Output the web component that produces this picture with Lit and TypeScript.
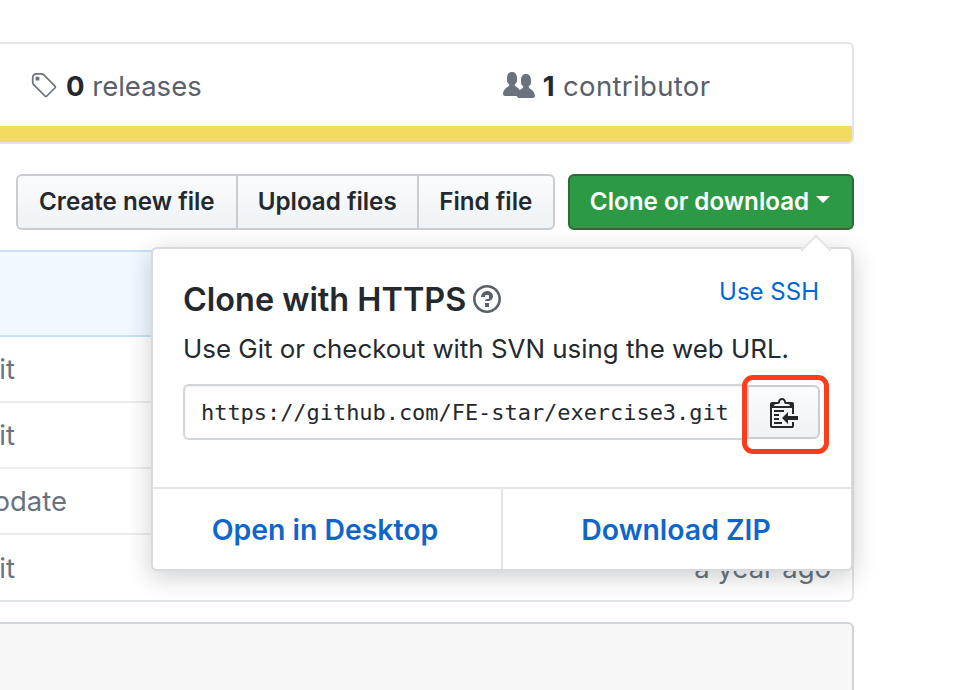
import { LitElement, html, css } from "lit";
import { customElement } from "lit/decorators.js";

const tagPath = "M7.73 1.73C7.26 1.26 6.62 1 5.96 1H3.5C2.13 1 1 2.13 1 3.5v2.47c0 .66.27 1.3.73 1.77l6.06 6.06c.39.39 1.02.39 1.41 0l4.59-4.59a.996.996 0 000-1.41L7.73 1.73zM2.38 7.09c-.31-.3-.47-.7-.47-1.13V3.5c0-.88.72-1.59 1.59-1.59h2.47c.42 0 .83.16 1.13.47l6.14 6.13-4.73 4.73-6.13-6.15zM3.01 3h2v2H3V3h.01z";
const orgPath = "M16 12.999c0 .439-.45 1-1 1H7.995c-.539 0-.994-.447-.995-.999H1c-.54 0-1-.561-1-1 0-2.634 3-4 3-4s.229-.409 0-1c-.841-.621-1.058-.59-1-3 .058-2.419 1.367-3 2.5-3s2.442.58 2.5 3c.058 2.41-.159 2.379-1 3-.229.59 0 1 0 1s1.549.711 2.42 2.088C9.196 9.369 10 8.999 10 8.999s.229-.409 0-1c-.841-.62-1.058-.59-1-3 .058-2.419 1.367-3 2.5-3s2.437.581 2.495 3c.059 2.41-.158 2.38-1 3-.229.59 0 1 0 1s3.005 1.366 3.005 4z";
const clipPath = "M2 13h4v1H2v-1zm5-6H2v1h5V7zm2 3V8l-3 3 3 3v-2h5v-2H9zM4.5 9H2v1h2.5V9zM2 12h2.5v-1H2v1zm9 1h1v2c-.02.28-.11.52-.3.7-.19.18-.42.28-.7.3H1c-.55 0-1-.45-1-1V4c0-.55.45-1 1-1h3c0-1.11.89-2 2-2 1.11 0 2 .89 2 2h3c.55 0 1 .45 1 1v5h-1V6H1v9h10v-2zM2 5h8c0-.55-.45-1-1-1H8c-.55 0-1-.45-1-1s-.45-1-1-1-1 .45-1 1-.45 1-1 1H3c-.55 0-1 .45-1 1z";
const qPath = "M6 10h2v2H6v-2zm4-3.5C10 8.64 8 9 8 9H6c0-.55.45-1 1-1h.5c.28 0 .5-.22.5-.5v-1c0-.28-.22-.5-.5-.5h-1c-.28 0-.5.22-.5.5V7H4c0-1.5 1.5-3 3-3s3 1 3 2.5zM7 2.3c3.14 0 5.7 2.56 5.7 5.7s-2.56 5.7-5.7 5.7A5.71 5.71 0 011.3 8c0-3.14 2.56-5.7 5.7-5.7zM7 1C3.14 1 0 4.14 0 8s3.14 7 7 7 7-3.14 7-7-3.14-7-7-7z";

@customElement("app-root")
export class AppRoot extends LitElement {
  static styles = css`
    :host { display: block; width: 958px; height: 690px; overflow: hidden; background: #fff; font-family: Inter, "Liberation Sans", sans-serif; color: #24292e; }
    * { box-sizing: border-box; }
    .page { position: relative; width: 854px; height: 690px; padding-top: 42px; }
    .summary { margin-left: -20px; height: 102px; border: 2px solid #e1e4e8; border-radius: 6px; overflow: hidden; display: flex; flex-direction: column; }
    .stats { height: 82px; display: flex; align-items: center; font-size: 27.5px; color: #586069; padding-top: 2px; }
    .stat { display: flex; align-items: center; gap: 8px; white-space: nowrap; }
    .stat b { color: #24292e; font-weight: 700; }
    .stat.rel { margin-left: 48px; }
    .stat.con { margin-left: 301px; }
    .stat.con span { letter-spacing: .35px; }
    .stat svg { fill: #6a737d; display: block; }
    .bar { height: 16px; background: #f1dc60; }
    .actions { display: flex; justify-content: space-between; margin: 30px 0 20px 16px; }
    .group { display: flex; height: 56px; border: 2px solid #c9cdd1; border-radius: 6px; background: linear-gradient(#fafbfc, #eff3f6); }
    .group span { display: flex; align-items: center; padding: 0 20.5px 2px 20px; font-size: 24.2px; font-weight: 600; color: #24292e; white-space: nowrap; }
    .group span:first-child { padding: 0 21px 2px 21px; }
    .group span + span { border-left: 2px solid #c9cdd1; }
    .green { height: 56px; width: 286px; display: flex; align-items: center; justify-content: center; gap: 7px; padding-bottom: 2px; padding-right: 2px; border: 2px solid #2a6b37; border-radius: 6px; background: #2c9a45; color: #fff; font-size: 24.2px; font-weight: 600; white-space: nowrap; }
    .caret { width: 0; height: 0; border: 7.5px solid transparent; border-top-color: #fff; border-bottom: 0; margin-bottom: 4px; }
    .files { margin-left: -20px; height: 352px; border: 2px solid #e1e4e8; border-top: 0; border-radius: 6px; display: flex; flex-direction: column; }
    .head { flex: none; height: 87px; background: #f1f8ff; border-top: 2px solid #c8e1ff; border-bottom: 2px solid #c8e1ff; }
    .row { flex: none; height: 66px; display: flex; align-items: center; justify-content: space-between; font-size: 27.5px; color: #6a737d; border-bottom: 2px solid #eaecef; padding-right: 21px; white-space: nowrap; }
    .row:last-child { height: 65px; border-bottom: 0; }
    .msg { width: 33px; display: flex; justify-content: flex-end; }
    .msg.far { width: 85px; }
    .bottom { margin: 20px 0 0 -20px; height: 100px; border: 2px solid #d1d5da; border-radius: 6px; background: #f7f7f8; }
    .pop { position: absolute; left: 151px; top: 247px; width: 702px; height: 324px; background: #fff; border: 2px solid #d8dadd; border-radius: 6px; box-shadow: 0 6px 24px rgba(27,31,35,.22); display: flex; flex-direction: column; }
    .pop::before { content: ""; position: absolute; right: 24px; top: -10px; width: 20px; height: 20px; background: #fff; border-left: 2px solid #e1e4e8; border-top: 2px solid #e1e4e8; transform: rotate(45deg); }
    .body { flex: 1; padding: 30px 32px 0 30px; display: flex; flex-direction: column; }
    .title { display: flex; justify-content: space-between; align-items: center; height: 40px; }
    h3 { margin: 0; font-size: 32.4px; font-weight: 600; display: flex; align-items: center; gap: 7px; white-space: nowrap; }
    h3 svg { fill: #586069; display: block; }
    .ssh { color: #0366d6; font-size: 24px; margin-top: -16px; white-space: nowrap; }
    p { margin: 14px 0 19px; font-size: 25.9px; line-height: 32px; white-space: nowrap; }
    .clone { display: flex; align-items: center; position: relative; width: 637px; }
    .url { flex: 1; height: 56px; border: 2px solid #d1d5da; border-right: 0; border-radius: 6px 0 0 6px; background: #fff; font-family: "DejaVu Sans Mono", monospace; font-size: 22px; letter-spacing: -.05px; display: flex; align-items: center; padding-left: 16px; white-space: nowrap; box-shadow: inset 0 1px 2px rgba(27,31,35,.075); }
    .copy { width: 73px; height: 54px; border: 2px solid #c9cdd1; border-radius: 0 6px 6px 0; background: linear-gradient(#fafbfc, #eff3f6); display: flex; align-items: center; justify-content: center; }
    .copy svg { fill: #24292e; display: block; }
    .mark { position: absolute; right: -9px; top: -9px; width: 87px; height: 79px; border: 5px solid #fb3d1b; border-radius: 11px; }
    .foot { height: 82px; display: flex; border-top: 2px solid #e1e4e8; }
    .foot a { display: flex; align-items: center; justify-content: center; color: #0f66c9; font-size: 28.4px; font-weight: 600; white-space: nowrap; }
    .foot a:first-child { flex: none; width: 348px; padding-right: 4px; }
    .foot a + a { flex: 1; padding-right: 2px; border-left: 2px solid #e1e4e8; }
  `;

  render() {
    return html`
      <div class="page">
        <section class="summary">
          <div class="stats">
            <div class="stat rel">
              <svg width="28" height="30" viewBox="0 0 15 16"><path d=${tagPath}></path></svg>
              <span><b>0</b> releases</span>
            </div>
            <div class="stat con">
              <svg width="32" height="32" viewBox="0 0 16 16"><path d=${orgPath}></path></svg>
              <span><b>1</b> contributor</span>
            </div>
          </div>
          <div class="bar"></div>
        </section>
        <div class="actions">
          <div class="group"><span>Create new file</span><span>Upload files</span><span>Find file</span></div>
          <div class="green">Clone or download <i class="caret"></i></div>
        </div>
        <section class="files">
          <div class="head"></div>
          <div class="row"><span class="msg">it</span></div>
          <div class="row"><span class="msg">it</span></div>
          <div class="row"><span class="msg far">odate</span></div>
          <div class="row"><span class="msg">it</span><span>a year ago</span></div>
        </section>
        <div class="bottom"></div>
        <div class="pop">
          <div class="body">
            <div class="title">
              <h3>Clone with HTTPS <svg width="28" height="32" viewBox="0 0 14 16"><path d=${qPath}></path></svg></h3>
              <span class="ssh">Use SSH</span>
            </div>
            <p>Use Git or checkout with SVN using the web URL.</p>
            <div class="clone">
              <div class="url">https://github.com/FE-star/exercise3.git</div>
              <div class="copy"><svg width="28" height="32" viewBox="0 0 14 16"><path d=${clipPath}></path></svg></div>
              <div class="mark"></div>
            </div>
          </div>
          <div class="foot"><a>Open in Desktop</a><a>Download ZIP</a></div>
        </div>
      </div>
    `;
  }
}
